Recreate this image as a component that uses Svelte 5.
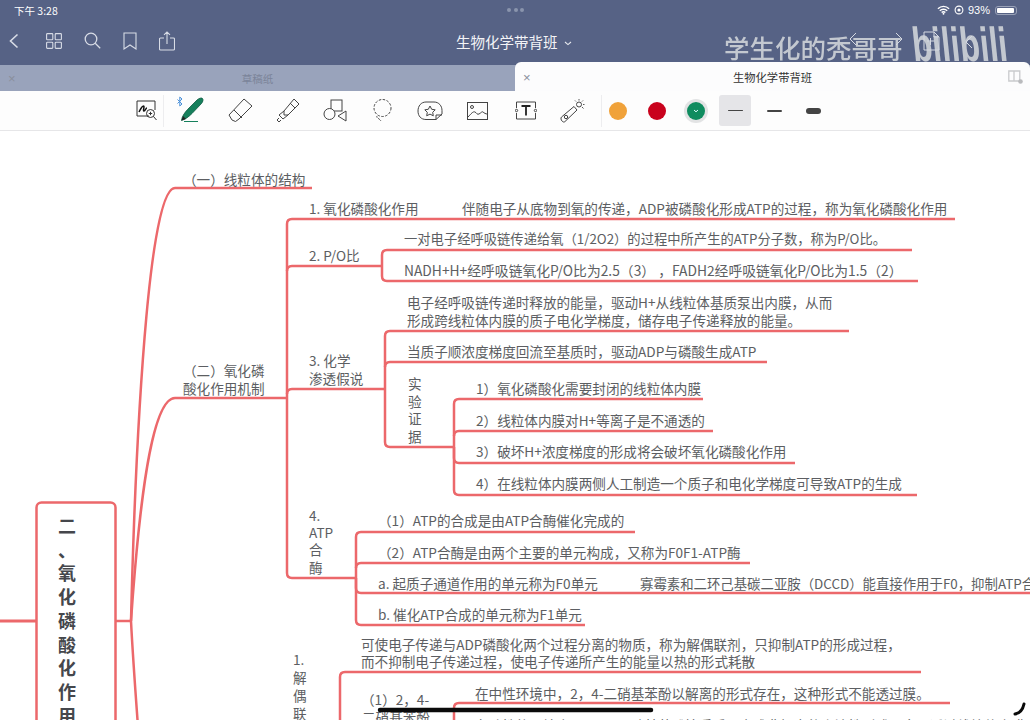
<script>
  const fw = (s) => s.replace(/,/g, '\uFF0C').replace(/\(/g, '\uFF08').replace(/\)/g, '\uFF09');
  const texts = [
    ['(一)线粒体的结构', 183, 180],
    ['1. 氧化磷酸化作用', 309, 209],
    ['伴随电子从底物到氧的传递,ADP被磷酸化形成ATP的过程,称为氧化磷酸化作用', 462, 209],
    ['一对电子经呼吸链传递给氧(1/2O2)的过程中所产生的ATP分子数,称为P/O比。', 404, 240, 13.3],
    ['2. P/O比', 309, 256],
    ['NADH+H+经呼吸链氧化P/O比为2.5(3) ,FADH2经呼吸链氧化P/O比为1.5(2)', 404, 271, 13.8],
    ['电子经呼吸链传递时释放的能量,驱动H+从线粒体基质泵出内膜,从而', 407, 303],
    ['形成跨线粒体内膜的质子电化学梯度,储存电子传递释放的能量。', 407, 321],
    ['当质子顺浓度梯度回流至基质时,驱动ADP与磷酸生成ATP', 407, 352],
    ['3. 化学', 309, 361],
    ['渗透假说', 309, 379],
    ['(二)氧化磷', 183, 371],
    ['酸化作用机制', 183, 389],
    ['实', 408, 384], ['验', 408, 402], ['证', 408, 419], ['据', 408, 437],
    ['1)氧化磷酸化需要封闭的线粒体内膜', 476, 389],
    ['2)线粒体内膜对H+等离子是不通透的', 476, 421],
    ['3)破坏H+浓度梯度的形成将会破坏氧化磷酸化作用', 476, 452],
    ['4)在线粒体内膜两侧人工制造一个质子和电化学梯度可导致ATP的生成', 476, 484],
    ['4.', 309, 516], ['ATP', 309, 533], ['合', 309, 550], ['酶', 309, 568],
    ['(1)ATP的合成是由ATP合酶催化完成的', 378, 521],
    ['(2)ATP合酶是由两个主要的单元构成,又称为F0F1-ATP酶', 378, 553],
    ['a. 起质子通道作用的单元称为F0单元', 378, 584],
    ['寡霉素和二环己基碳二亚胺(DCCD)能直接作用于F0,抑制ATP合成', 640, 584, 13.4],
    ['b. 催化ATP合成的单元称为F1单元', 378, 615],
    ['可使电子传递与ADP磷酸化两个过程分离的物质,称为解偶联剂,只抑制ATP的形成过程,', 361, 645],
    ['而不抑制电子传递过程,使电子传递所产生的能量以热的形式耗散', 361, 662],
    ['1.', 293, 660], ['解', 293, 678], ['偶', 293, 696], ['联', 293, 714],
    ['(1)2,4-', 361, 700],
    ['二硝基苯酚', 362, 718],
    ['在中性环境中,2,4-二硝基苯酚以解离的形式存在,这种形式不能透过膜。', 475, 694],
    ['在酸性的环境中,2,4-二硝基苯酚接受质子变成非解离的脂溶性形式,容易透过线粒体内膜', 475, 726],
  ].map(([t, x, y, size = 13.6]) => [fw(t), x, y, size]);
  const paths = [
    'M131 621 C134 500 145 188 175 188 H312',
    'M131 621 C138 520 150 398 175 398 H287',
    'M131 621 C133 660 136 700 139 740',
    'M115 621 H131',
    'M287 398 V224 Q287 219 292 219 H955',
    'M287 271 Q287 266 292 266 H382',
    'M287 394 Q287 389 292 389 H385',
    'M287 398 V573 Q287 578 292 578 H356',
    'M382 266 V255 Q382 250 387 250 H912',
    'M382 266 V276 Q382 281 387 281 H918',
    'M385 389 V336 Q385 331 390 331 H849',
    'M385 367 Q385 362 390 362 H767',
    'M385 389 V442 Q385 447 390 447 H454',
    'M454 447 V404 Q454 399 459 399 H703',
    'M454 436 Q454 431 459 431 H713',
    'M454 447 V458 Q454 463 459 463 H795',
    'M454 447 V490 Q454 495 459 495 H917',
    'M356 578 V537 Q356 532 361 532 H635',
    'M356 568 Q356 563 361 563 H750',
    'M356 578 V588 Q356 593 361 593 H1032',
    'M356 578 V620 Q356 625 361 625 H585',
    'M340 730 V677 Q340 672 345 672 H921',
    'M454 730 V708 Q454 703 459 703 H950',
  ];
</script>

<div class="page">
  <header class="chrome">
    <div class="status">
      <span>下午 3:28</span>
      <span class="dots"><i></i><i></i><i></i></span>
      <span class="stat-right">
        <svg width="13" height="10" viewBox="0 0 14 10"><path d="M1 3.600a8.500 8.500 0 0 1 12 0M3 5.800a5.600 5.600 0 0 1 8 0M5 7.800a2.800 2.800 0 0 1 4 0" fill="none" stroke="#fff" stroke-width="1.500"/><circle cx="7" cy="9" r="1" fill="#fff"/></svg>
        <svg width="10" height="10" viewBox="0 0 10 10"><circle cx="5" cy="5" r="3.900" fill="none" stroke="#fff" stroke-width="1.100"/><circle cx="5" cy="5" r="1.600" fill="#fff"/></svg>
        <span>93%</span>
        <span class="battery"><b></b></span>
      </span>
    </div>
    <div class="nav">
      <div class="nav-left">
        <svg class="back" width="12" height="16" viewBox="0 0 12 16"><path d="M9.500 1.500 2.500 8l7 6.500" fill="none" stroke="#d8dce6" stroke-width="1.600"/></svg>
        <svg width="16" height="16" viewBox="0 0 16 16" fill="none" stroke="#d8dce6" stroke-width="1.100"><rect x=".6" y=".6" width="6.200" height="6.200" rx=".8"/><rect x="9.200" y=".6" width="6.200" height="6.200" rx=".8"/><rect x=".6" y="9.200" width="6.200" height="6.200" rx=".8"/><rect x="9.200" y="9.200" width="6.200" height="6.200" rx=".8"/></svg>
        <svg width="17" height="17" viewBox="0 0 17 17" fill="none" stroke="#d8dce6" stroke-width="1.300"><circle cx="7" cy="7" r="5.800"/><path d="m11.200 11.200 5 5"/></svg>
        <svg width="14" height="18" viewBox="0 0 14 18" fill="none" stroke="#d8dce6" stroke-width="1.100"><path d="M1 1h12v16l-6-4-6 4z"/></svg>
        <svg width="16" height="20" viewBox="0 0 16 20" fill="none" stroke="#d8dce6" stroke-width="1.100"><path d="M5 7H1.500a1 1 0 0 0-1 1v10a1 1 0 0 0 1 1h13a1 1 0 0 0 1-1V8a1 1 0 0 0-1-1H11M8 13V1M5 3.800 8 1l3 2.800"/></svg>
      </div>
      <div class="title">生物化学带背班 <svg width="8" height="5" viewBox="0 0 8 5"><path d="m1 1 3 2.600L7 1" fill="none" stroke="#e6e8ee" stroke-width="1.100"/></svg></div>
      <div class="watermark">
        <span class="wm-name">学生化的秃哥哥</span>
        <span class="wm-logo">bilibili</span>
      </div>
      <svg class="ghost" width="190" height="30" viewBox="0 0 190 30" fill="none" stroke="#d5d9e2" stroke-width="1"><path d="M8 2 2 8l6 6M48 2l6 6-6 6M76 1h10l5 5v13H76zM86 1v5h5M79 10h7M82.500 7v7M124 5l-6 6 6 6"/></svg>
    </div>
  </header>

  <div class="tabs">
    <div class="tab off"><span class="x">×</span><span class="tab-name">草稿纸</span></div>
    <div class="tab on">
      <span class="x">×</span><span class="tab-name">生物化学带背班</span>
      <svg class="split" width="15" height="14" viewBox="0 0 15 14"><path d="M.8 1h11v10H.8zM6 1v10" fill="none" stroke="#c9cacd" stroke-width="1.300"/><circle cx="12.500" cy="11.500" r="2.300" fill="#b9babd"/></svg>
    </div>
  </div>

  <div class="toolbar">
    <svg class="ti" width="21" height="21" viewBox="0 0 21 21" fill="none" stroke="#333"><path d="M13 16H1V1h18v9" stroke-width="1"/><path d="M3 12c1-2 3-6 4.500-6s-1 5 .5 5 1.500-3 3-3" stroke="#111" stroke-width="1.500"/><circle cx="14.500" cy="13.500" r="4" stroke-width="1"/><path d="m17.500 16.500 3 3.500M12.800 13.500h3.400M14.500 11.800v3.400" stroke-width="1"/></svg>
    <span class="sep"></span>
    <span class="pen">
      <svg width="30" height="27" viewBox="0 0 30 27"><path d="M1.500 3.500 6 8l-2.200 2V1L6 3 1.500 7.500" fill="none" stroke="#4a90d9" stroke-width="1"/><path d="M5.500 24.500c.5-4 2.500-7 6-11L21 4c2-1.800 4.500-2.500 5.500-1.500s.5 3.500-1.500 5.500l-9 9.500c-3.500 3.500-7 6-10.500 7z" fill="#16805c" stroke="#0c5a41" stroke-width=".8"/><path d="m5.500 24.500 4.500-1.500-3-3z" fill="#222"/><path d="M8 25.500h14" stroke="#16805c" stroke-width="1"/></svg>
    </span>
    <svg class="ti" width="25" height="25" viewBox="0 0 25 25" fill="none" stroke="#444" stroke-width="1"><path d="M16 1 24 8 11 21 7.500 23.500 4 22 1 17z"/><path d="m6 12 8 8"/></svg>
    <svg class="ti" width="24" height="25" viewBox="0 0 24 25" fill="none" stroke="#444" stroke-width="1"><path d="M18 1 23 6 12 17H8V13z"/><path d="M8 13 3 17 7 21 12 17M3 20l-2 2 2 2 2-2M14 5l5 5"/></svg>
    <svg class="ti g25" width="24" height="23" viewBox="0 0 24 23" fill="none" stroke="#444" stroke-width="1"><rect x="8" y="1" width="11" height="11"/><circle cx="6.500" cy="15" r="5.500" fill="#fdfdfd"/><path d="M23 12v10l-8-5z" fill="#fdfdfd"/></svg>
    <svg class="ti g24" width="21" height="23" viewBox="0 0 21 23" fill="none" stroke="#444" stroke-width="1"><circle cx="10.500" cy="9" r="8.500" stroke-dasharray="2.500 1.500"/><path d="M5 17c-1 2 2 2 4 5" stroke-dasharray="2 1"/></svg>
    <svg class="ti g24" width="26" height="20" viewBox="0 0 26 20" fill="none" stroke="#444" stroke-width="1"><path d="M19 18.500H9C4 18.500 1 15 1 10S4 1 9 1h8c5 0 8 4 8 8.500V13l-6 5.500V14h6"/><path d="m13 5 1.700 3.300 3.500.5-2.500 2.500.6 3.500-3.300-1.700-3.300 1.700.6-3.500L7.800 8.800l3.500-.5z"/></svg>
    <svg class="ti g27" width="21" height="18" viewBox="0 0 21 18" fill="none" stroke="#444" stroke-width="1"><rect x=".5" y=".5" width="20" height="17"/><circle cx="5" cy="5" r="1.500"/><path d="M1 15c3-3 5-6 7-5s2 3 4 2 3-3 4-2 3 2 4 2"/></svg>
    <svg class="ti" width="22" height="19" viewBox="0 0 22 19" fill="none" stroke="#444" stroke-width="1"><path d="M1.500 7V1h19v6M1.500 12v6h19v-6"/><circle cx="1.500" cy="9.500" r="1.200"/><circle cx="20.500" cy="9.500" r="1.200"/><path d="M6.500 5h9M11 5v9.500" stroke="#222" stroke-width="1.800"/></svg>
    <svg class="ti g15" width="26" height="25" viewBox="0 0 26 25" fill="none" stroke="#444" stroke-width="1"><path d="M1.500 19 14 8.500l3 3.500L5 23.500c-1 1-2 .5-3-.5s-1.500-3-.5-4z"/><circle cx="6" cy="19" r="1.700"/><circle cx="19" cy="6.500" r="2.500"/><path d="M19 1v1.500M24.500 6.500H23M23 2.500 22 3.500M23.500 10.500l-1.500-1.500M15 2.500l1 1" stroke-width=".9"/></svg>
    <span class="sep second"></span>
    <span class="dot orange"></span>
    <span class="dot red"></span>
    <span class="dot green"><svg width="6" height="4" viewBox="0 0 6 4"><path d="m1 1 2 1.800L5 1" fill="none" stroke="#dff" stroke-width="1"/></svg></span>
    <span class="weight active"><i class="w1"></i></span>
    <span class="weight"><i class="w2"></i></span>
    <span class="weight"><i class="w3"></i></span>
  </div>

  <main class="canvas">
    <svg class="links" width="1030" height="589" viewBox="0 131 1030 589">
      {#each paths as d}<path {d} />{/each}
      <path class="thick" d="M0 621 H36" />
      <rect x="36.500" y="502.500" width="79" height="240" rx="5" />
    </svg>
    <div class="root-box">二、氧化磷酸化作用</div>
    {#each texts as [t, x, y, size]}
      <span class="node" style="left:{x}px;top:{y - 131 - 11}px;font-size:{size}px">{t}</span>
    {/each}
    <svg class="inkpad" width="1030" height="589" viewBox="0 131 1030 589">
      <path d="M380 710 H651" />
      <path class="small" d="M1015 714 Q1022 713 1024 704" />
    </svg>
  </main>
</div>

<style>
  :global(body) { margin: 0; background: #fff; }
  .page {
    width: 1030px; height: 720px; overflow: hidden; display: flex; flex-direction: column;
    font-family: "Noto Sans CJK SC", "Liberation Sans", sans-serif;
    filter: blur(.3px);
  }
  .chrome { background: #566285; height: 65px; color: #fff; flex: none; display: flex; flex-direction: column; }
  .status { height: 20px; display: grid; grid-template-columns: 1fr auto 1fr; align-items: center; padding: 0 13px 0 14px; font-size: 10.500px; }
  .dots { display: flex; gap: 2.500px; }
  .dots i { width: 4px; height: 4px; border-radius: 50%; background: #8a94ad; }
  .stat-right { display: flex; align-items: center; justify-content: flex-end; gap: 4px; font-family: "Liberation Sans", sans-serif; font-size: 11px; }
  .battery { width: 22px; height: 9px; border: 1px solid #9aa2b8; border-radius: 3px; padding: 1px; box-sizing: border-box; margin-left: 1px; display: flex; }
  .battery b { flex: 1; background: #fff; border-radius: 1px; margin-right: 1px; }
  .nav { flex: 1; position: relative; display: flex; align-items: center; padding: 0 0 4px 8px; }
  .nav-left { display: flex; align-items: center; gap: 22px; }
  .back { margin-right: 4px; }
  .title { position: absolute; left: 456px; top: 13px; font-size: 14.500px; line-height: 18px; color: #f3f4f7; white-space: nowrap; }
  .title svg { margin-left: 3px; vertical-align: 2px; }
  .watermark { position: absolute; left: 724px; top: 10px; display: flex; gap: 11px; color: #c3c8d0; width: 300px; }
  .wm-name { font-size: 25.500px; line-height: 34px; font-weight: 500; white-space: nowrap; }
  .wm-logo { font: 700 33px/34px "Liberation Sans", sans-serif; display: inline-block; transform: skewX(6deg) scaleY(1.450); transform-origin: left 30px; height: 34px; margin-top: 4px; }
  .ghost { position: absolute; left: 848px; top: 11px; }
  .tabs { height: 26px; flex: none; display: flex; position: relative; background: #99a3bb; }
  .tab { width: 515px; position: relative; display: flex; align-items: center; justify-content: center; }
  .tab.off { color: #7b8499; font-size: 10.500px; }
  .tab.on { background: #fcfcfd; color: #333; margin-top: -3px; border-radius: 6px 6px 0 0; font-size: 11.300px; }
  .x { position: absolute; left: 8px; top: 50%; transform: translateY(-50%); font-size: 13px; color: #8a8f9c; font-family: "Liberation Sans", sans-serif; }
  .split { position: absolute; right: 7px; top: 8px; }
  .toolbar {
    height: 40px; flex: none; box-sizing: border-box; background: #fdfdfd; border-bottom: 1px solid #e6e6e8;
    display: flex; align-items: center; padding-left: 136px; position: relative;
  }
  .ti { flex: none; margin-right: 23px; }
  .g25 { margin-right: 25px; }
  .g24 { margin-right: 24px; }
  .g27 { margin-right: 27px; }
  .g15 { margin-right: 15px; }
  .sep { width: 1px; height: 32px; background: #ededef; margin: 0 15px 0 -17px; flex: none; }
  .sep.second { margin: 0 7px 0 0; }
  .pen { margin-right: 22px; margin-top: -2px; display: flex; }
  .pen svg { margin-left: -3px; }
  .dot { width: 18px; height: 18px; border-radius: 50%; margin-right: 21px; flex: none; display: flex; align-items: center; justify-content: center; }
  .orange { background: #f0a23a; }
  .red { background: #c9021d; }
  .green { background: #0f8c5f; box-shadow: 0 0 0 3px #e2e3e4; }
  .weight { width: 32px; height: 31px; flex: none; margin-right: 7px; display: flex; align-items: center; justify-content: center; border-radius: 3px; }
  .green + .weight { margin-left: -7px; }
  .active { background: #e5e5e8; }
  .weight i { display: block; width: 15px; background: #444; border-radius: 3px; }
  .w1 { height: 1px; } .w2 { height: 2px; } .w3 { height: 6px; }
  .canvas { position: relative; flex: 1; background: #fff; overflow: hidden; }
  .links, .inkpad { position: absolute; left: 0; top: 0; }
  .links path, .links rect { fill: none; stroke: #ec686b; stroke-width: 2.500; }
  .links rect { fill: #fff; }
  .links .thick { stroke-width: 3; }
  .inkpad path { fill: none; stroke: #0a0a0a; stroke-width: 4.500; stroke-linecap: round; }
  .inkpad .small { stroke-width: 3; }
  .root-box {
    position: absolute; left: 58px; top: 383px; width: 18px; font-size: 18px; font-weight: 700; line-height: 23.700px;
    color: #45474c; word-break: break-all; line-break: anywhere;
  }
  .node { position: absolute; line-height: 20px; color: #5c5e62; white-space: nowrap; }
</style>
